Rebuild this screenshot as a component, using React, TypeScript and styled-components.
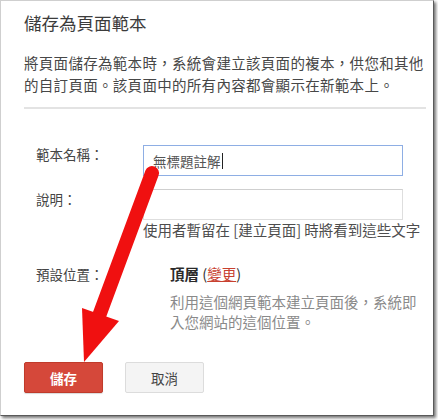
import React from "react";
import styled, { createGlobalStyle } from "styled-components";

const Global = createGlobalStyle`
  html, body { margin: 0; padding: 0; background: #ffffff; }
  body { font-family: "Noto Sans CJK TC", "Noto Sans", sans-serif; }
  * { box-sizing: border-box; }
`;

const Stage = styled.div`
  position: relative;
  width: 438px;
  height: 420px;
`;

const Frame = styled.div`
  width: 434px;
  height: 416px;
  border-left: 1px solid #cfcfcf;
  border-top: 1px solid #cfcfcf;
  border-right: 1px solid #5a5a5a;
  border-bottom: 1px solid #5a5a5a;
  box-shadow: 2px 2px 3px rgba(0, 0, 0, 0.55);
  overflow: hidden;
  background: #fff;
  padding: 9px 7px 0 23px;
  display: flex;
  flex-direction: column;
`;

const Title = styled.h1`
  margin: 0;
  font-size: 17.5px;
  line-height: 26px;
  font-weight: 400;
  color: #3c3c3c;
  white-space: nowrap;
`;

const Intro = styled.p`
  margin: 16px 0 0;
  font-size: 14.5px;
  line-height: 22px;
  letter-spacing: 0.3px;
  color: #474747;
  white-space: nowrap;
`;

const Divider = styled.hr`
  margin: 11px 0 0;
  border: 0;
  height: 2px;
  background: #e3e3e3;
`;

const Form = styled.div`
  margin-top: 36px;
  padding-left: 12px;
  display: flex;
  flex-direction: column;
`;

const Row = styled.div<{ $labelWidth: number; $gap: number }>`
  display: grid;
  grid-template-columns: ${(p) => p.$labelWidth}px auto;
  margin-top: ${(p) => p.$gap}px;
  align-items: start;
`;

const Label = styled.div<{ $shift?: number }>`
  font-size: 13.5px;
  line-height: 20px;
  color: #454545;
  white-space: nowrap;
  margin-top: ${(p) => p.$shift ?? 0}px;
`;

const Field = styled.div<{ $focused?: boolean }>`
  width: 260px;
  height: 31px;
  border: 1px solid ${(p) => (p.$focused ? "#8eaee4" : "#dedede")};
  border-top-color: ${(p) => (p.$focused ? "#8eaee4" : "#cfcfcf")};
  background: #fff;
  padding: 0 9px;
  display: flex;
  align-items: center;
  font-size: 13.5px;
  color: #555;
`;

const Caret = styled.span`
  display: inline-block;
  width: 1px;
  height: 16px;
  background: #222;
  margin-left: 1px;
`;

const Column = styled.div`
  display: flex;
  flex-direction: column;
`;

const Hint = styled.div`
  font-size: 14.5px;
  line-height: 20px;
  color: #4d4d4d;
  white-space: nowrap;
`;

const Value = styled.div`
  font-size: 14.5px;
  line-height: 20px;
  color: #333;
  white-space: nowrap;
`;

const Strong = styled.span`
  font-weight: 700;
  color: #2a2a2a;
`;

const ChangeLink = styled.a`
  color: #c8402f;
  text-decoration: underline;
`;

const Note = styled.div`
  margin-top: 8px;
  font-size: 14.5px;
  line-height: 20px;
  color: #8a8a8a;
  white-space: nowrap;
`;

const Actions = styled.div`
  margin-top: 30px;
  display: flex;
  gap: 22px;
`;

const Button = styled.button<{ $primary?: boolean }>`
  width: 79px;
  height: 31px;
  border-radius: 2px;
  font-family: "Noto Sans CJK TC", sans-serif;
  font-size: 13.5px;
  font-weight: ${(p) => (p.$primary ? 700 : 400)};
  color: ${(p) => (p.$primary ? "#ffffff" : "#444444")};
  background: ${(p) => (p.$primary ? "#d5483a" : "#f4f4f4")};
  border: 1px solid ${(p) => (p.$primary ? "#c03b2b" : "#dcdcdc")};
  box-shadow: ${(p) => (p.$primary ? "0 1px 1px rgba(0,0,0,0.15)" : "none")};
  padding: 0;
`;

const Overlay = styled.svg`
  position: absolute;
  left: 0;
  top: 0;
  pointer-events: none;
`;

export default function App() {
  return (
    <>
      <Global />
      <Stage>
        <Frame>
          <Title>儲存為頁面範本</Title>
          <Intro>
            將頁面儲存為範本時，系統會建立該頁面的複本，供您和其他
            <br />
            的自訂頁面。該頁面中的所有內容都會顯示在新範本上。
          </Intro>
          <Divider />
          <Form>
            <Row $labelWidth={107} $gap={0}>
              <Label $shift={-1}>範本名稱：</Label>
              <Field $focused>
                無標題註解
                <Caret />
              </Field>
            </Row>
            <Row $labelWidth={107} $gap={13}>
              <Label>說明：</Label>
              <Column>
                <Field />
                <Hint>使用者暫留在 [建立頁面] 時將看到這些文字</Hint>
              </Column>
            </Row>
            <Row $labelWidth={134} $gap={24}>
              <Label>預設位置：</Label>
              <Column>
                <Value>
                  <Strong>頂層</Strong> (<ChangeLink>變更</ChangeLink>)
                </Value>
                <Note>
                  利用這個網頁範本建立頁面後，系統即
                  <br />
                  入您網站的這個位置。
                </Note>
              </Column>
            </Row>
          </Form>
          <Actions>
            <Button $primary>儲存</Button>
            <Button>取消</Button>
          </Actions>
        </Frame>
        <Overlay width="438" height="420" viewBox="0 0 438 420">
          <line
            x1="152"
            y1="173"
            x2="99"
            y2="316"
            stroke="#f01010"
            strokeWidth="14"
            strokeLinecap="round"
          />
          <polygon points="82,308 119,321 84,362" fill="#f01010" />
        </Overlay>
      </Stage>
    </>
  );
}
